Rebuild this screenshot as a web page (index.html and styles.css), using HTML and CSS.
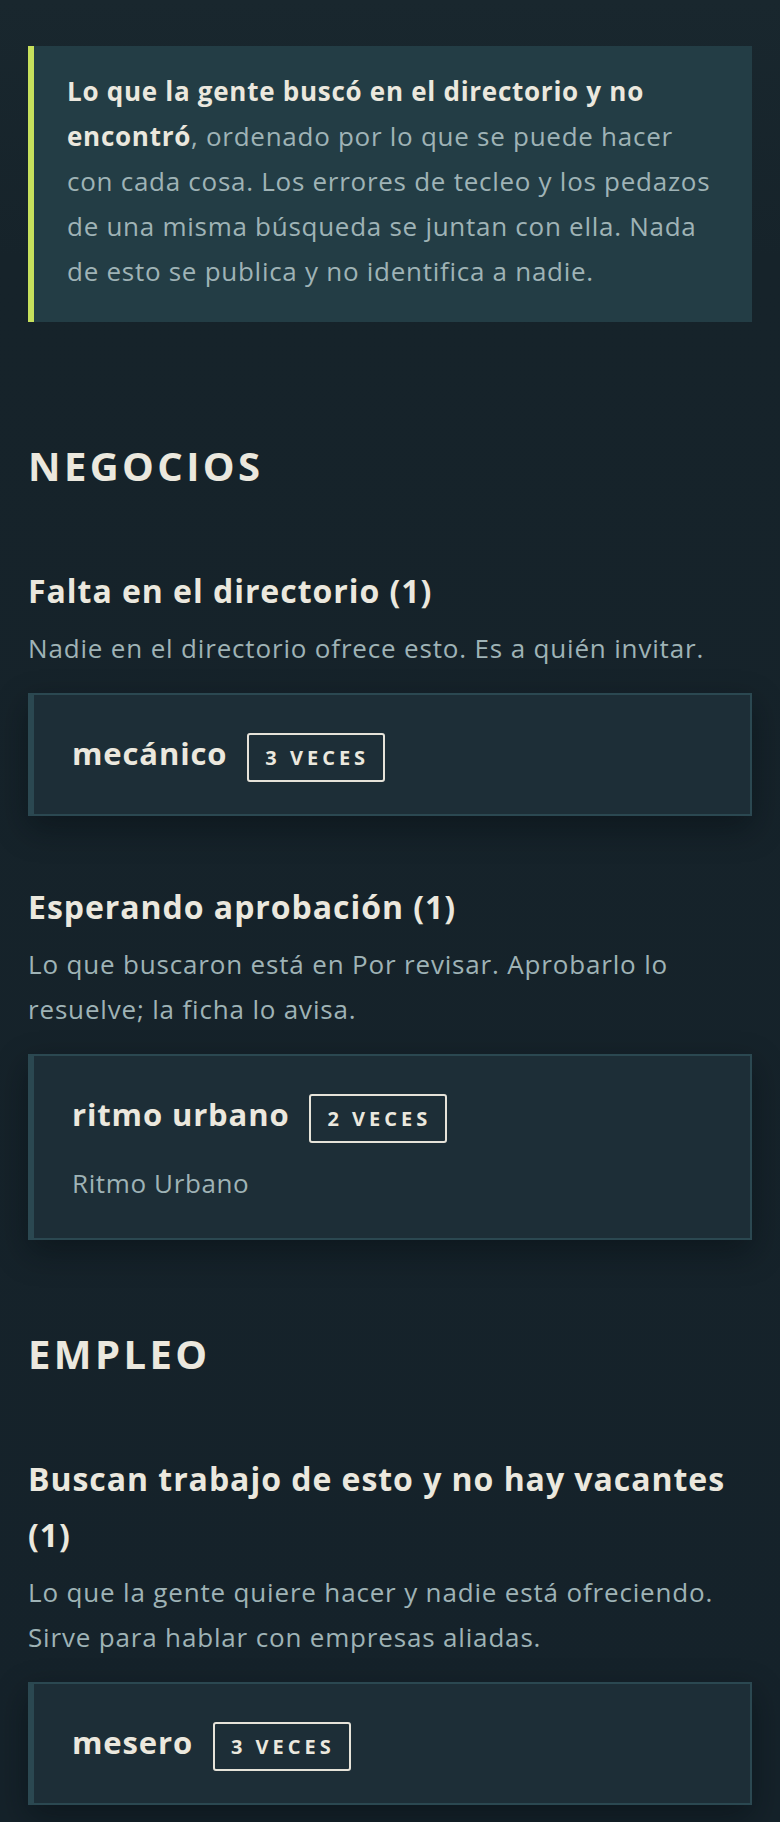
FILE: index.html
```html
<!DOCTYPE html>
<html lang="es">
<head>
<meta charset="utf-8">
<title>Búsquedas sin resultado</title>
<link rel="stylesheet" href="styles.css">
</head>
<body>
<main class="page">
  <div class="callout">
    <p><strong>Lo que la gente buscó en el directorio y no</strong> <strong>encontró</strong>, ordenado por lo que se puede hacer con cada cosa. Los errores de tecleo y los pedazos de una misma búsqueda se juntan con ella. Nada de esto se publica y no identifica a nadie.</p>
  </div>

  <section class="section section-first">
    <h2 class="section-title">Negocios</h2>

    <div class="group">
      <h3 class="group-title">Falta en el directorio (1)</h3>
      <p class="group-desc">Nadie en el directorio ofrece esto. Es a quién invitar.</p>
      <div class="card">
        <div class="card-head">
          <span class="term">mecánico</span>
          <span class="badge">3 veces</span>
        </div>
      </div>
    </div>

    <div class="group">
      <h3 class="group-title">Esperando aprobación (1)</h3>
      <p class="group-desc">Lo que buscaron está en Por revisar. Aprobarlo lo resuelve; la ficha lo avisa.</p>
      <div class="card">
        <div class="card-head">
          <span class="term">ritmo urbano</span>
          <span class="badge">2 veces</span>
        </div>
        <p class="card-sub">Ritmo Urbano</p>
      </div>
    </div>
  </section>

  <section class="section">
    <h2 class="section-title">Empleo</h2>

    <div class="group">
      <h3 class="group-title">Buscan trabajo de esto y no hay vacantes (1)</h3>
      <p class="group-desc">Lo que la gente quiere hacer y nadie está ofreciendo. Sirve para hablar con empresas aliadas.</p>
      <div class="card">
        <div class="card-head">
          <span class="term">mesero</span>
          <span class="badge">3 veces</span>
        </div>
      </div>
    </div>
  </section>
</main>
</body>
</html>
```

FILE: styles.css
```css
html {
  background: #16232a;
}

body {
  margin: 0;
  min-height: 1822px;
  background: linear-gradient(180deg, #19272e 0px, #16232a 260px, #15222a 100%);
  color: #ebe8de;
  font-family: "Open Sans", "Liberation Sans", sans-serif;
}

.page {
  padding: 46px 28px 14px;
}

.callout {
  background: #233d45;
  border-left: 6px solid #c6e05c;
  padding: 23px 32px 28px 33px;
}

.callout p {
  margin: 0;
  font-size: 26px;
  line-height: 45px;
  letter-spacing: 0.028em;
  color: #9fb3b6;
}

.callout strong {
  color: #ebe8de;
  font-weight: 700;
}

.section {
  margin-top: 90px;
}

.section-first {
  margin-top: 120px;
}

.section-title {
  margin: 0;
  font-size: 40px;
  line-height: 48px;
  font-weight: 700;
  letter-spacing: 0.085em;
  text-transform: uppercase;
  color: #ebe8de;
}

.group {
  margin-top: 63px;
}

.section-title + .group {
  margin-top: 73px;
}

.group-title {
  margin: 0;
  font-size: 32px;
  line-height: 56px;
  font-weight: 700;
  letter-spacing: 0.03em;
  color: #ebe8de;
}

.group-desc {
  margin: 7px 0 0;
  font-size: 26px;
  line-height: 45px;
  letter-spacing: 0.032em;
  color: #9fb3b6;
}

.card {
  margin-top: 22px;
  background: #1d2e37;
  border: 2px solid #2b4851;
  border-left-width: 6px;
  padding: 38px 36px 32px 38px;
  box-shadow: 0 12px 30px rgba(5, 12, 16, 0.45);
}

.card-head {
  display: flex;
  align-items: baseline;
  gap: 20px;
}

.term {
  font-size: 31px;
  line-height: 40px;
  font-weight: 700;
  letter-spacing: 0.028em;
  color: #ebe8de;
}

.badge {
  box-sizing: border-box;
  height: 49px;
  line-height: 45px;
  padding: 0 14px 0 16px;
  border: 2px solid #e6e3d9;
  border-radius: 3px;
  font-size: 20px;
  font-weight: 700;
  letter-spacing: 0.2em;
  text-transform: uppercase;
  color: #ebe8de;
}

.card-sub {
  margin: 18px 0 0;
  font-size: 26px;
  line-height: 45px;
  letter-spacing: 0.024em;
  color: #9fb3b6;
}
```
